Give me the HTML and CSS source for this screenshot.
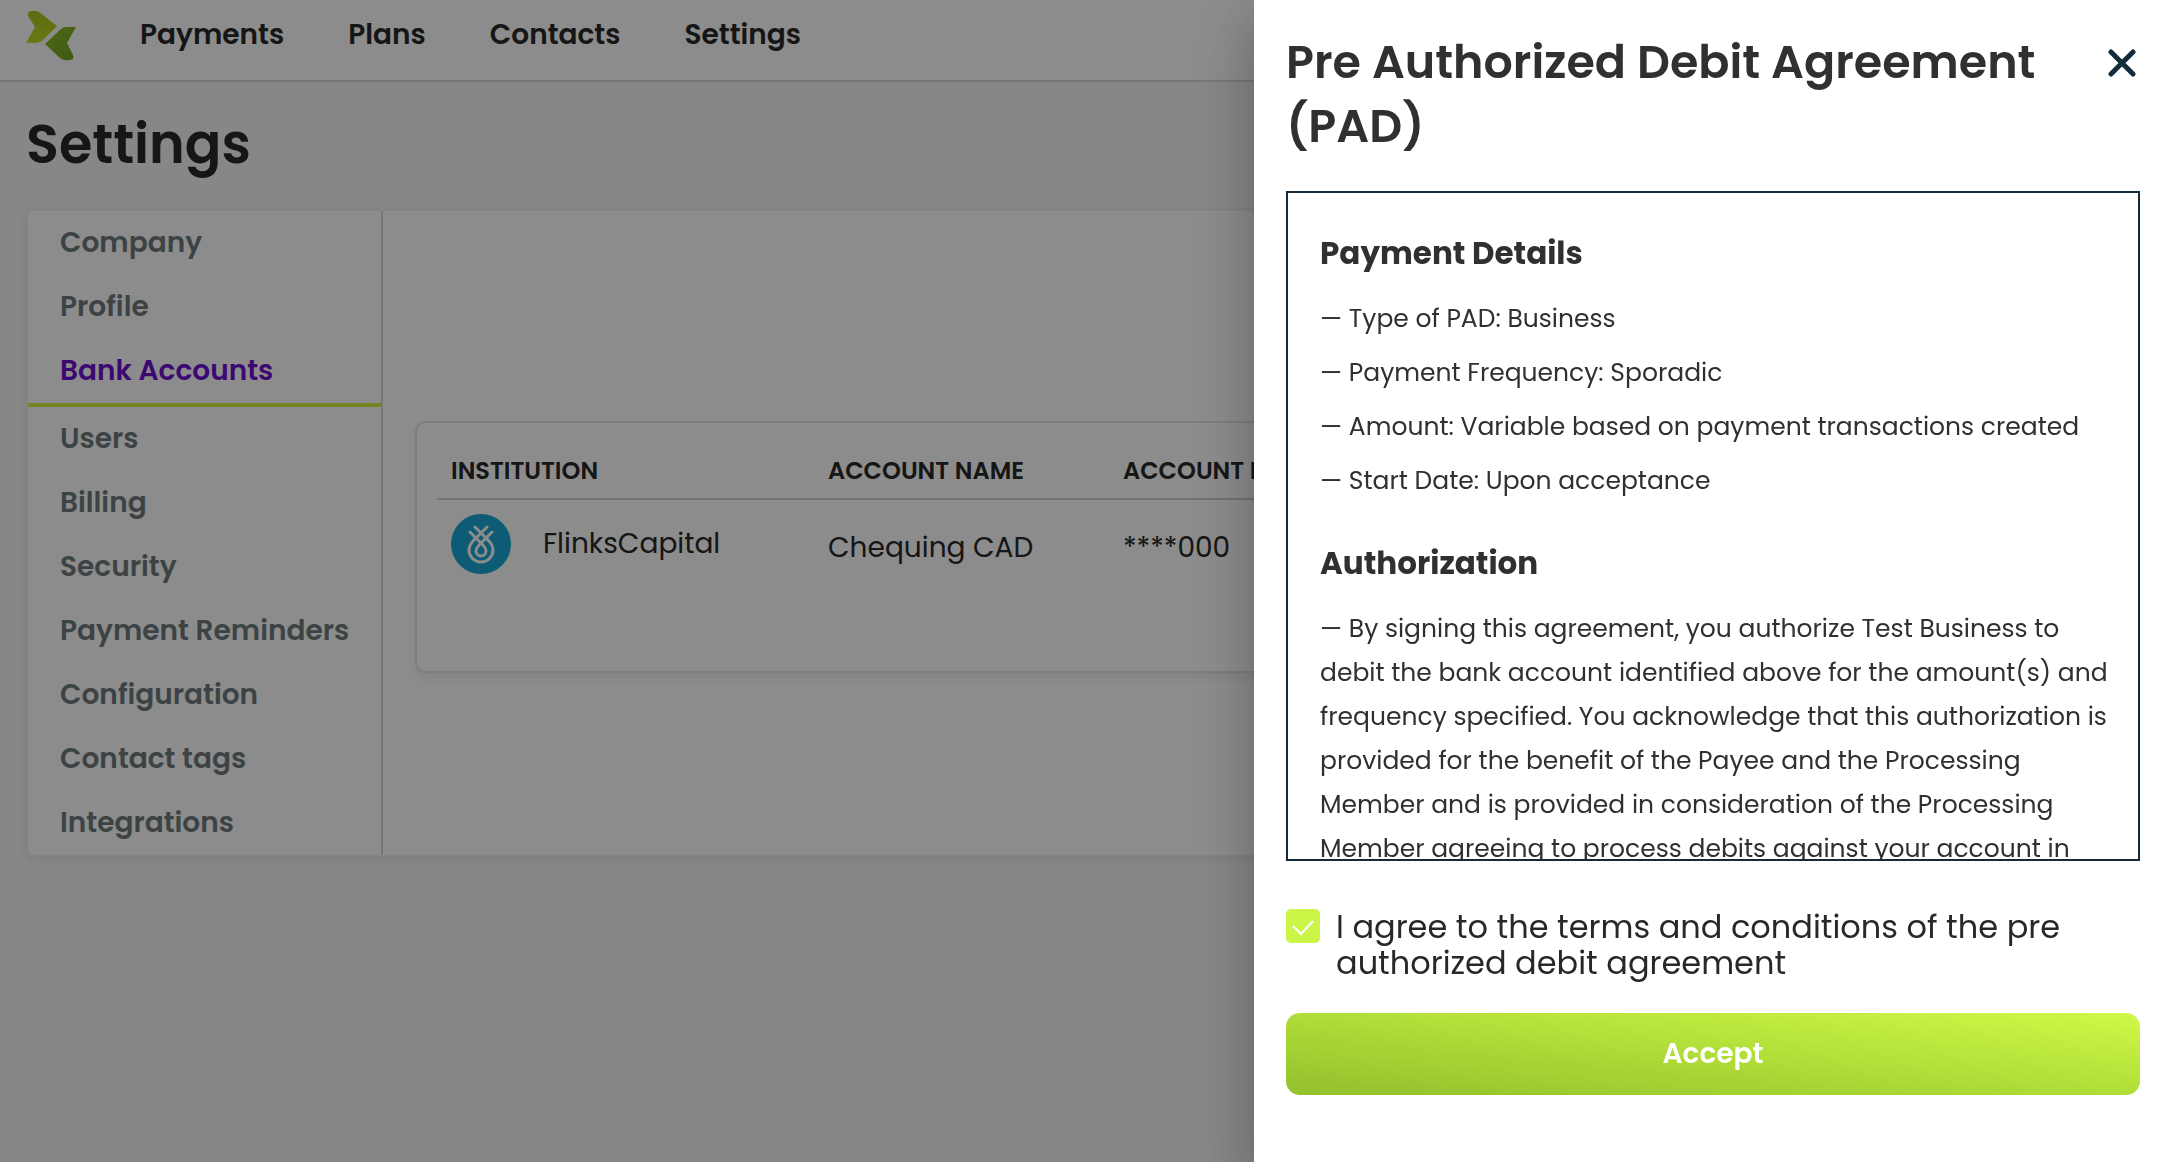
FILE: index.html
```html
<!DOCTYPE html>
<html lang="en">

<head>
  <meta charset="UTF-8">
  <meta name="viewport" content="width=device-width, initial-scale=1.0">
  <title>Settings - Bank Accounts</title>
  <link rel="stylesheet" href="styles.css">
</head>

<body>
  <header class="topbar">
    <a class="logo" href="#" aria-label="Home">
      <svg width="50" height="52" viewBox="0 0 50 52">
        <defs>
          <linearGradient id="logoTop" x1="0" y1="0" x2="0" y2="1">
            <stop offset="0" stop-color="#a9c41c" />
            <stop offset="1" stop-color="#c2da26" />
          </linearGradient>
          <linearGradient id="logoBottom" x1="0" y1="0" x2="1" y2="1">
            <stop offset="0" stop-color="#8fbc2c" />
            <stop offset="1" stop-color="#6fa61c" />
          </linearGradient>
        </defs>
        <path fill="url(#logoTop)" d="M2 16Q1 11 6 11Q10 10 13 12L31 26L17 40Q14 43 10 43H0L9 27Z" transform="translate(0 -9)" />
        <path fill="url(#logoBottom)" d="M50 18L41 34L47 46Q49 51 43 51Q38 52 34 49L19 35L35 20Q37 18 40 18Z" />
      </svg>
    </a>
    <nav class="main-nav">
      <a href="#">Payments</a>
      <a href="#">Plans</a>
      <a href="#">Contacts</a>
      <a href="#">Settings</a>
    </nav>
  </header>

  <main class="page">
    <h1>Settings</h1>
    <div class="panel">
      <nav class="side-nav">
        <a href="#">Company</a>
        <a href="#">Profile</a>
        <a href="#" class="active">Bank Accounts</a>
        <a href="#">Users</a>
        <a href="#">Billing</a>
        <a href="#">Security</a>
        <a href="#">Payment Reminders</a>
        <a href="#">Configuration</a>
        <a href="#">Contact tags</a>
        <a href="#">Integrations</a>
      </nav>
      <section class="panel-content">
        <div class="card">
          <table class="accounts">
            <thead>
              <tr>
                <th class="col-institution">Institution</th>
                <th class="col-name">Account name</th>
                <th>Account number</th>
              </tr>
            </thead>
            <tbody>
              <tr>
                <td class="institution-cell">
                  <div class="institution">
                    <svg width="60" height="60" viewBox="0 0 60 60">
                      <circle cx="30" cy="30" r="30" fill="#1aa6d8" />
                      <g fill="none" stroke="#fff" stroke-width="3" stroke-linecap="round">
                        <path d="M24 13L37 26M36 13L23 26M19 18L30 29M41 18L30 29" />
                        <path d="M37 26C40 29 42 32 42 36A12 12 0 0 1 18 36C18 32 20 29 23 26" />
                        <path d="M30 29C27 32 25 34 25 37A5 5 0 0 0 35 37C35 34 33 32 30 29" />
                      </g>
                    </svg>
                    <span>FlinksCapital</span>
                  </div>
                </td>
                <td>Chequing CAD</td>
                <td>****000</td>
              </tr>
            </tbody>
          </table>
        </div>
      </section>
    </div>
  </main>

  <div class="overlay"></div>

  <aside class="drawer" role="dialog" aria-labelledby="drawerTitle">
    <div class="drawer-header">
      <h2 id="drawerTitle">Pre Authorized Debit Agreement (PAD)</h2>
      <button class="close-btn" type="button" aria-label="Close">
        <svg width="28" height="28" viewBox="0 0 28 28">
          <path d="M3 3L25 25M25 3L3 25" stroke="#132b3a" stroke-width="5" stroke-linecap="round" />
        </svg>
      </button>
    </div>

    <div class="agreement" tabindex="0">
      <h3>Payment Details</h3>
      <p>— Type of PAD: Business</p>
      <p>— Payment Frequency: Sporadic</p>
      <p>— Amount: Variable based on payment transactions created</p>
      <p>— Start Date: Upon acceptance</p>
      <h3>Authorization</h3>
      <p>— By signing this agreement, you authorize Test Business to debit the bank account identified above for the amount(s) and frequency specified. You acknowledge that this authorization is provided for the benefit of the Payee and the Processing Member and is provided in consideration of the Processing Member agreeing to process debits against your account in</p>
    </div>

    <div class="agree">
      <input type="checkbox" id="agree" checked>
      <label for="agree">I agree to the terms and conditions of the pre authorized debit agreement</label>
    </div>
    <button class="accept-btn" type="button">Accept</button>
  </aside>
</body>

</html>
```
FILE: styles.css
```css
* {
  box-sizing: border-box;
}

body {
  margin: 0;
  min-height: 100vh;
  overflow: hidden;
  background-color: #f6f6f6;
  font-family: Poppins, Inter, sans-serif;
  font-size: 28px;
  color: #282828;
}

a {
  color: inherit;
  text-decoration: none;
}

h1,
h2,
h3,
p {
  margin: 0;
}

button {
  border: none;
  font-family: inherit;
  cursor: pointer;
}

.topbar {
  display: flex;
  align-items: center;
  gap: 64px;
  height: 82px;
  padding: 0 26px 10px;
  background-color: #fff;
  border-bottom: 2px solid #d8d8d8;
}

.logo {
  display: flex;
}

.main-nav {
  display: flex;
  gap: 64px;
  font-weight: 600;
}

.page {
  padding: 26px;
}

h1 {
  margin-bottom: 29px;
  font-size: 54px;
  font-weight: 600;
  line-height: 72px;
}

.panel {
  display: flex;
  background-color: #fff;
  border: 2px solid #eee;
  border-radius: 8px;
  box-shadow: 0 2px 8px rgba(0, 0, 0, 0.08);
}

.side-nav {
  display: flex;
  flex-direction: column;
  flex: none;
  width: 355px;
  border-right: 2px solid #d8d8d8;
  font-weight: 600;
  line-height: 64px;
  white-space: nowrap;
  color: #6f7a7c;
}

.side-nav a {
  padding: 0 32px;
}

.side-nav .active {
  color: #7010d0;
  border-bottom: 4px solid #d2f43c;
}

.panel-content {
  flex: 1;
  padding: 210px 32px 32px;
}

.card {
  padding: 20px 20px 76px;
  border: 2px solid #e4e4e4;
  border-radius: 10px;
  box-shadow: 0 6px 10px rgba(0, 0, 0, 0.06);
}

.accounts {
  width: 100%;
  table-layout: fixed;
  border-collapse: collapse;
  text-align: left;
}

.accounts th {
  height: 56px;
  padding: 0 14px;
  border-bottom: 2px solid #cfcfcf;
  font-size: 24px;
  font-weight: 600;
  text-transform: uppercase;
}

.accounts td {
  height: 96px;
  padding: 0 14px;
}

.accounts .institution-cell {
  padding-top: 14px;
  vertical-align: top;
}

.col-institution {
  width: 377px;
}

.col-name {
  width: 295px;
}

.institution {
  display: flex;
  align-items: center;
  gap: 32px;
}

.overlay {
  position: fixed;
  inset: 0;
  background-color: rgba(0, 0, 0, 0.45);
}

.drawer {
  position: fixed;
  top: 0;
  right: 0;
  bottom: 0;
  display: flex;
  flex-direction: column;
  width: 912px;
  max-width: 100%;
  padding: 30px 26px 67px 32px;
  background-color: #fff;
  box-shadow: 0 16px 20px -10px rgba(0, 0, 0, 0.2), 0 32px 48px 4px rgba(0, 0, 0, 0.14), 0 12px 60px 10px rgba(0, 0, 0, 0.12);
}

.drawer-header {
  display: flex;
  align-items: flex-start;
  justify-content: space-between;
  gap: 32px;
  margin-bottom: 33px;
}

.drawer-header h2 {
  font-size: 46px;
  font-weight: 600;
  line-height: 64px;
  color: #303030;
}

.close-btn {
  display: flex;
  padding: 19px 4px;
  background: none;
}

.agreement {
  flex: 1;
  min-height: 0;
  overflow-y: auto;
  scrollbar-width: none;
  padding: 32px 24px 32px 32px;
  border: 2px solid #132b3a;
  font-size: 25px;
  line-height: 44px;
  color: #303030;
}

.agreement h3 {
  margin: 6px 0 22px;
  font-size: 31px;
  font-weight: 700;
  line-height: 44px;
}

.agreement p {
  margin-bottom: 10px;
}

.agreement p + h3 {
  margin-top: 38px;
}

.agree {
  display: flex;
  align-items: flex-start;
  gap: 16px;
  margin: 48px 0 32px;
}

.agree input {
  flex: none;
  appearance: none;
  width: 34px;
  height: 34px;
  margin: 0;
  border-radius: 5px;
  background: #cbf547 url("data:image/svg+xml,%3Csvg xmlns='http://www.w3.org/2000/svg' viewBox='0 0 34 34'%3E%3Cpath d='M7 17l8 8L27 12' fill='none' stroke='%23fff' stroke-width='2'/%3E%3C/svg%3E");
}

.agree label {
  font-size: 32px;
  line-height: 36px;
}

.accept-btn {
  flex: none;
  height: 82px;
  border-radius: 14px;
  background: linear-gradient(to top right, #93c02d, #b0dd38 50%, #d0f847);
  color: #fff;
  font-size: 28px;
  font-weight: 600;
}
```
